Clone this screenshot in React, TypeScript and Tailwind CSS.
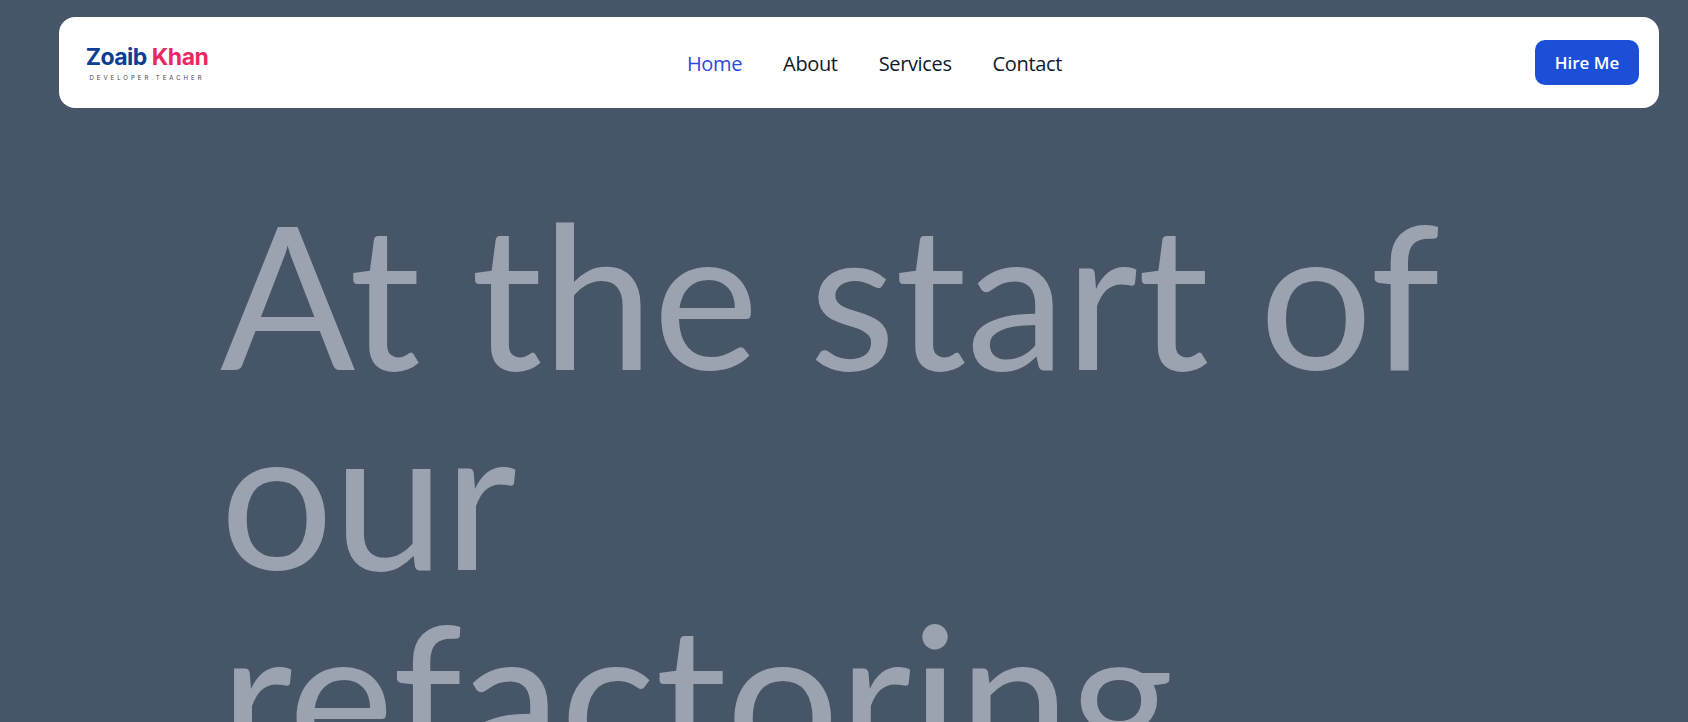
const segoe = "font-['Open_Sans','Noto_Sans',sans-serif]";

function Logo() {
  return (
    <div className="flex w-[124px] flex-col items-center">
      <div className="font-['Inter',sans-serif] text-[23px] font-bold leading-[27px] tracking-[-0.5px] whitespace-nowrap">
        <span className="text-[#0b3f94]">Zoaib</span>{" "}
        <span className="text-[#e8295f]">Khan</span>
      </div>
      <div className="mt-[3px] font-['Inter',sans-serif] text-[6px] leading-[8px] tracking-[3px] whitespace-nowrap text-[#4a3f3f]">
        DEVELOPER.TEACHER
      </div>
    </div>
  );
}

export default function App() {
  return (
    <div className={`h-[722px] w-full overflow-hidden bg-[#475569] ${segoe}`}>
      <div className="pt-[17px] pl-[59px]">
        <nav className="flex h-[91px] w-[1600px] items-center justify-between rounded-[16px] bg-white pr-[20px] pl-[26px]">
          <Logo />
          <ul className="flex items-center gap-[41px] pt-[2px] pl-[5px] text-[20px] font-medium tracking-[-0.35px] text-[#111827]">
            <li className="text-[#2b4ae2]">Home</li>
            <li>About</li>
            <li>Services</li>
            <li>Contact</li>
          </ul>
          <button className="flex h-[45px] w-[104px] items-center justify-center rounded-[10px] bg-[#1d4ed8] pt-[1px] text-[17px] font-semibold text-white">
            Hire Me
          </button>
        </nav>
      </div>
      <h1 className="mt-[85px] pl-[220px] font-['Lato',sans-serif] text-[200px] leading-[200px] font-normal tracking-[-0.5px] text-[#9ba3b0]">
        At the start of
        <br />
        our
        <br />
        refactoring
      </h1>
    </div>
  );
}
